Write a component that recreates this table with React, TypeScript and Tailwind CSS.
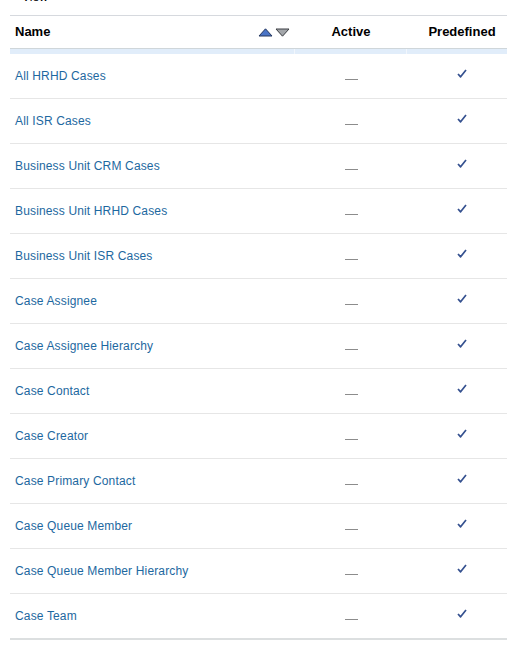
import React from "react"

const rows = [
  "All HRHD Cases",
  "All ISR Cases",
  "Business Unit CRM Cases",
  "Business Unit HRHD Cases",
  "Business Unit ISR Cases",
  "Case Assignee",
  "Case Assignee Hierarchy",
  "Case Contact",
  "Case Creator",
  "Case Primary Contact",
  "Case Queue Member",
  "Case Queue Member Hierarchy",
  "Case Team",
]

function Check() {
  return (
    <svg width="10" height="9" viewBox="0 0 10 9" className="block">
      <path d="M1 5 L3.6 7.8 L9 1" fill="none" stroke="#34508f" strokeWidth="1.7" strokeLinejoin="round" />
    </svg>
  )
}

function SortArrows() {
  return (
    <div className="flex items-center gap-[2px]">
      <svg width="15" height="9" viewBox="0 0 15 9">
        <path d="M7.5 0.8 L14 8 L1 8 Z" fill="#4a74c6" stroke="#24365e" strokeWidth="1" />
      </svg>
      <svg width="15" height="9" viewBox="0 0 15 9">
        <path d="M1 1 L14 1 L7.5 8.2 Z" fill="#a3a6aa" stroke="#3c3f44" strokeWidth="1" />
      </svg>
    </div>
  )
}

export default function App() {
  return (
    <div className="h-[652px] w-[507px] overflow-hidden bg-white font-['Liberation_Sans',Arial,sans-serif]">
      {/* View menu, cut off at the top */}
      <div className="h-[15px] overflow-hidden pl-[22px]">
        <div className="-mt-[10px] flex items-center gap-[6px] text-[12px] leading-[14px] text-black">
          <span>View</span>
          <span className="text-[9px]">▼</span>
        </div>
      </div>

      <div className="ml-[10px] w-[507px]">
        {/* Header */}
        <div className="flex h-[34px] border-t border-[#d6d9de] border-b border-b-[#cfd6da] text-[13px] font-bold leading-[16px] text-black">
          <div className="flex w-[285px] items-center justify-between pl-[5px] pr-[5px]">
            <span>Name</span>
            <SortArrows />
          </div>
          <div className="flex w-[112px] items-center justify-center">Active</div>
          <div className="flex w-[110px] items-center justify-center">Predefined</div>
        </div>
        <div className="flex h-[5px] bg-[#e1edfa]">
          <div className="w-[285px] border-r border-[#f1f6fc]" />
          <div className="w-[112px] border-r border-[#f1f6fc]" />
          <div className="flex-1" />
        </div>

        {/* Rows */}
        {rows.map((name, i) => (
          <div
            key={name}
            className={
              i === rows.length - 1
                ? "flex h-[46px] border-b-2 border-[#dcdfe0]"
                : "flex h-[45px] border-b border-[#e6e6e6]"
            }
          >
            <div className="w-[285px] pl-[5px] pt-[15px] text-[12px] leading-[14px] tracking-[0.15px] text-[#1d68a0]">
              {name}
            </div>
            <div className="flex w-[112px] justify-center pt-[25px]">
              <div className="h-px w-[13px] bg-[#8c8c8c]" />
            </div>
            <div className="flex w-[110px] justify-center pt-[15px]">
              <Check />
            </div>
          </div>
        ))}
      </div>
    </div>
  )
}
